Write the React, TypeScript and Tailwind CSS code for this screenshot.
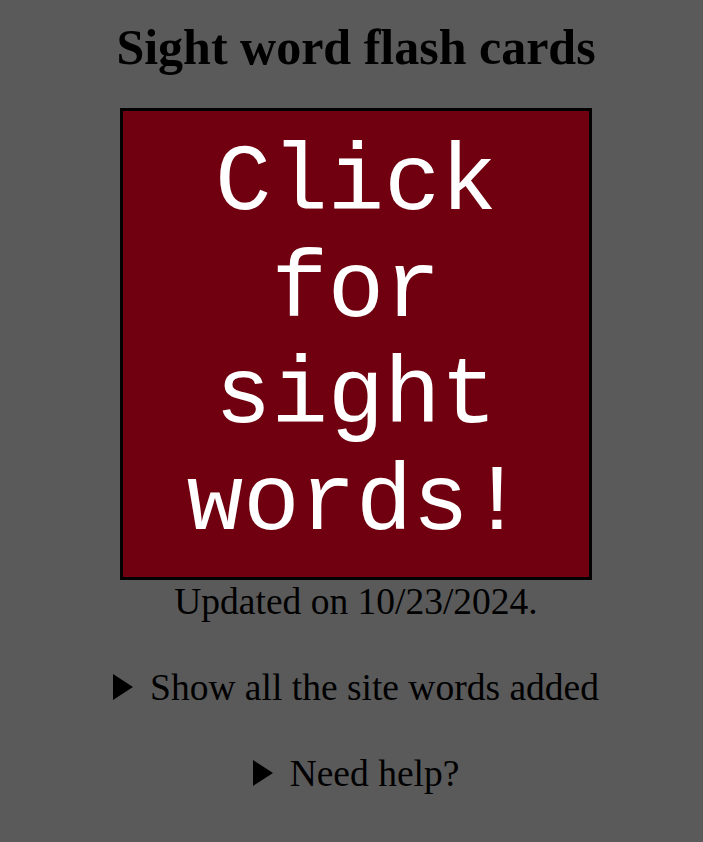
import { useState } from "react";

const words = ["the", "and", "a", "to", "said", "in", "he", "I", "of", "it", "was", "you", "they", "on", "she", "is", "for", "at", "his", "but"];

function Arrow() {
  return (
    <svg width="20" height="26" viewBox="0 0 20 26" className="inline-block align-baseline mr-[17px]">
      <path d="M0 0 L20 13 L0 26 Z" fill="black" />
    </svg>
  );
}

export default function App() {
  const [word, setWord] = useState<string | null>(null);

  const nextWord = () => {
    setWord(words[Math.floor(Math.random() * words.length)]);
  };

  return (
    <div
      className="min-h-screen bg-[#5a5a5a] pl-[9px] text-black text-center"
      style={{ fontFamily: '"Liberation Serif", "Times New Roman", serif' }}
    >
      <div className="flex flex-col items-center pt-[18px]">
        <h1 className="text-[50px] leading-[58px] font-bold">Sight word flash cards</h1>

        <button
          onClick={nextWord}
          className="mt-[32px] w-[472px] h-[472px] border-[3px] border-black bg-[#700010] flex items-center justify-center px-2 cursor-pointer"
        >
          <span
            className="text-white text-[94px] leading-[106.5px] break-words"
            style={{ fontFamily: '"Liberation Mono", "Courier New", monospace' }}
          >
            {word ?? "Click for sight words!"}
          </span>
        </button>

        <p className="text-[37.5px] leading-[43px]">Updated on 10/23/2024.</p>

        <details className="mt-[43px] text-[37.5px] leading-[43px]">
          <summary className="cursor-pointer list-none">
            <Arrow />Show all the site words added
          </summary>
          <p className="text-[24px] leading-[30px] mt-2">{words.join(", ")}</p>
        </details>

        <details className="mt-[43px] text-[37.5px] leading-[43px]">
          <summary className="cursor-pointer list-none">
            <Arrow />Need help?
          </summary>
          <p className="text-[24px] leading-[30px] mt-2">Click the card to see a new word.</p>
        </details>
      </div>
    </div>
  );
}
